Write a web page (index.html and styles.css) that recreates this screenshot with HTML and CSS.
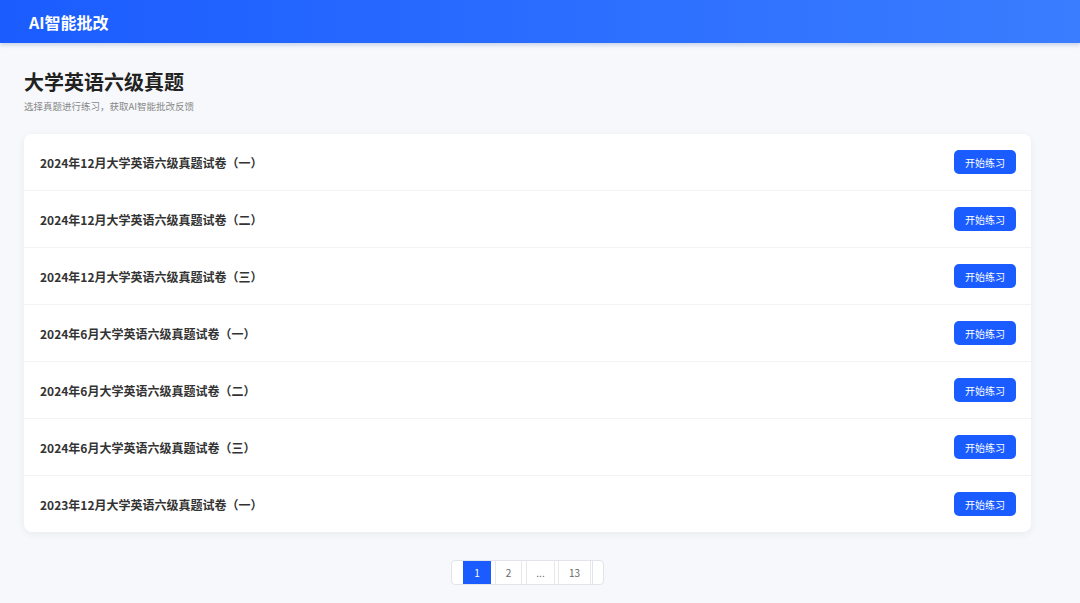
FILE: index.html
```html
<!DOCTYPE html>
<html>
<head>
  <meta charset="utf-8">
  <title>AI智能批改</title>
  <link rel="stylesheet" href="styles.css">
</head>
<body>
  <header class="topbar">
    <div class="brand">AI智能批改</div>
  </header>
  <main class="page">
    <h1 class="page-title">大学英语六级真题</h1>
    <p class="page-sub">选择真题进行练习，获取AI智能批改反馈</p>
    <ul class="paper-list">
      <li class="paper"><span class="paper-name">2024年12月大学英语六级真题试卷（一）</span><button class="btn-start">开始练习</button></li>
      <li class="paper"><span class="paper-name">2024年12月大学英语六级真题试卷（二）</span><button class="btn-start">开始练习</button></li>
      <li class="paper"><span class="paper-name">2024年12月大学英语六级真题试卷（三）</span><button class="btn-start">开始练习</button></li>
      <li class="paper"><span class="paper-name">2024年6月大学英语六级真题试卷（一）</span><button class="btn-start">开始练习</button></li>
      <li class="paper"><span class="paper-name">2024年6月大学英语六级真题试卷（二）</span><button class="btn-start">开始练习</button></li>
      <li class="paper"><span class="paper-name">2024年6月大学英语六级真题试卷（三）</span><button class="btn-start">开始练习</button></li>
      <li class="paper"><span class="paper-name">2023年12月大学英语六级真题试卷（一）</span><button class="btn-start">开始练习</button></li>
    </ul>
    <div class="pager-wrap">
      <div class="pager">
        <span class="pg-edge"></span>
        <span class="pg-item active">1</span>
        <span class="pg-item">2</span>
        <span class="pg-item more">...</span>
        <span class="pg-item wide">13</span>
        <span class="pg-edge next"></span>
      </div>
    </div>
  </main>
</body>
</html>
```

FILE: styles.css
```css
* {
  box-sizing: border-box;
}
body {
  margin: 0;
  background-color: #f6f8fb;
  font-family: "Noto Sans CJK SC", "Noto Sans", sans-serif;
  color: #222;
}
.topbar {
  height: 43px;
  padding-left: 29px;
  display: flex;
  align-items: center;
  background: linear-gradient(90deg, #1b5cff 0%, #3a7dff 100%);
  box-shadow: 0 2px 4px rgba(30, 70, 160, 0.22);
}
.brand {
  color: #fff;
  font-size: 16px;
  font-weight: bold;
  line-height: 1;
}
.page {
  width: 1007px;
  margin-left: 24px;
  padding-top: 25px;
}
.page-title {
  margin: 0;
  font-size: 20px;
  line-height: 28px;
  font-weight: bold;
  color: #222;
}
.page-sub {
  margin: 3px 0 0;
  font-size: 9.5px;
  line-height: 14px;
  color: #888;
}
.paper-list {
  list-style: none;
  margin: 21px 0 0;
  padding: 0;
  background-color: #fff;
  border-radius: 8px;
  box-shadow: 0 2px 8px rgba(0, 0, 0, 0.06);
  overflow: hidden;
}
.paper {
  height: 57px;
  padding: 0 15px 0 16px;
  display: flex;
  align-items: center;
  justify-content: space-between;
  border-bottom: 1px solid #f2f3f5;
}
.paper:last-child {
  height: 56px;
  border-bottom: 0;
}
.paper-name {
  font-size: 12px;
  font-weight: bold;
  color: #333;
}
.btn-start {
  border: 0;
  border-radius: 5px;
  width: 62px;
  height: 24px;
  padding: 0;
  background-color: #1a5cff;
  color: #fff;
  font-family: inherit;
  font-size: 10px;
  cursor: pointer;
}
.pager-wrap {
  margin-top: 28px;
  display: flex;
  justify-content: center;
}
.pager {
  display: flex;
  height: 25px;
  border: 1px solid #e1e4ea;
  border-radius: 4px;
  background-color: #fff;
  overflow: hidden;
}
.pg-edge {
  width: 11px;
}
.pg-edge.next {
  margin-left: 1px;
  border-left: 1px solid #e1e4ea;
}
.pg-item {
  width: 27px;
  margin-left: 4px;
  display: flex;
  align-items: center;
  justify-content: center;
  border: 1px solid #e6e8ec;
  border-top: 0;
  border-bottom: 0;
  font-size: 10px;
  color: #666;
}
.pg-item.active {
  width: 28px;
  margin-left: 0;
  background-color: #1a5cff;
  border-color: #1a5cff;
  color: #fff;
}
.pg-item.more {
  width: 29px;
}
.pg-item.wide {
  width: 33px;
  margin-left: 3px;
}
```
